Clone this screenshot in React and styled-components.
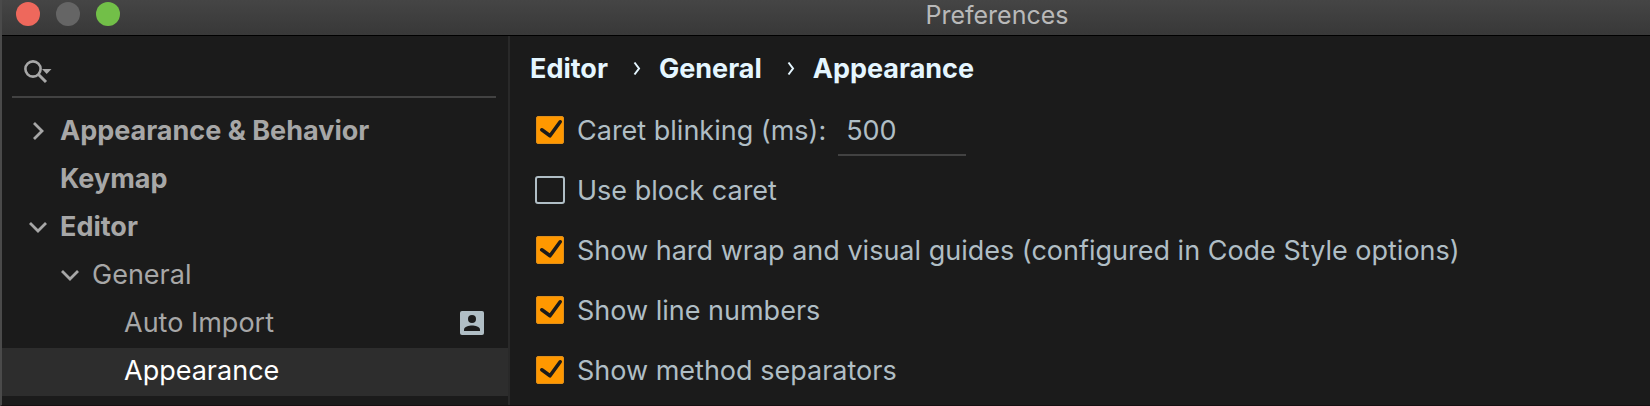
import { useState } from 'react';
import styled, { createGlobalStyle, css } from 'styled-components';

const GlobalStyle = createGlobalStyle`
  * {
    box-sizing: border-box;
  }

  body {
    margin: 0;
    background: #1b1b1b;
    font-family: Inter, "Liberation Sans", sans-serif;
    font-size: 27px;
    line-height: 32px;
  }

  button, input {
    font: inherit;
  }
`;

const tree = [
    {id: 'behavior', text: 'Appearance & Behavior', level: 0, bold: true, arrow: 'right'},
    {id: 'keymap', text: 'Keymap', level: 0, bold: true},
    {id: 'editor', text: 'Editor', level: 0, bold: true, arrow: 'down'},
    {id: 'general', text: 'General', level: 1, arrow: 'down'},
    {id: 'import', text: 'Auto Import', level: 2, project: true},
    {id: 'appearance', text: 'Appearance', level: 2},
];

const options = [
    {id: 'blinking', text: 'Caret blinking (ms):', checked: true, value: '500'},
    {id: 'block', text: 'Use block caret', checked: false},
    {id: 'guides', text: 'Show hard wrap and visual guides (configured in Code Style options)', checked: true},
    {id: 'numbers', text: 'Show line numbers', checked: true},
    {id: 'separators', text: 'Show method separators', checked: true},
];

const Window = styled.div`
  min-height: 100vh;
  display: flex;
  flex-direction: column;
  border-left: 2px solid #4a4a4a;
  border-bottom: 1px solid #161012;
  overflow: hidden;
`;

const TitleBar = styled.header`
  display: flex;
  align-items: flex-start;
  height: 36px;
  padding-left: 14px;
  background: linear-gradient(#454545, #383838);
  border-bottom: 1px solid #000;
`;

const Lights = styled.div`
  display: flex;
  gap: 16px;
  padding-top: 2px;
`;

const Light = styled.button`
  width: 24px;
  height: 24px;
  padding: 0;
  border: none;
  border-radius: 50%;
  background: ${(props) => props.$color};
`;

const Title = styled.h1`
  flex: 1;
  margin: 0;
  padding-left: 224px;
  font-size: 25px;
  font-weight: 400;
  line-height: 30px;
  text-align: center;
  color: #b9b9b9;
`;

const Body = styled.div`
  flex: 1;
  display: flex;
`;

const Sidebar = styled.nav`
  flex: none;
  width: 508px;
  border-right: 2px solid #292929;
`;

const Search = styled.label`
  display: flex;
  align-items: center;
  gap: 8px;
  height: 62px;
  margin: 0 12px 10px 10px;
  padding: 12px 0 0 12px;
  border-bottom: 2px solid #424242;
`;

const SearchInput = styled.input`
  flex: 1;
  min-width: 0;
  padding: 0;
  border: none;
  outline: none;
  background: transparent;
  color: #a7a7a7;
`;

const Tree = styled.ul`
  margin: 0;
  padding: 0;
  list-style: none;
`;

const TreeItem = styled.button`
  display: flex;
  align-items: center;
  width: 100%;
  height: 48px;
  padding: 0 24px 2px ${(props) => 24 + props.$level * 32}px;
  border: none;
  background: transparent;
  color: #a7a7a7;
  font-weight: ${(props) => (props.$bold ? 700 : 400)};
  text-align: left;

  ${(props) => props.$selected && css`
    background: #2d2d2d;
    color: #fff;
  `}
`;

const Arrow = styled.span`
  display: flex;
  flex: none;
  width: 34px;
`;

const TreeText = styled.span`
  flex: 1;
`;

const Content = styled.main`
  flex: 1;
  min-width: 0;
  padding: 16px 20px 0;
`;

const Breadcrumbs = styled.nav`
  display: flex;
  align-items: center;
  height: 34px;
  margin-bottom: 14px;
`;

const Crumb = styled.a`
  color: #e5f6ff;
  font-weight: 700;
  text-decoration: none;
`;

const CrumbArrow = styled.svg`
  margin: 0 18px 0 25px;
`;

const Row = styled.div`
  display: flex;
  align-items: center;
  gap: 12px;
  height: 60px;
`;

const Option = styled.label`
  display: flex;
  align-items: center;
  gap: 12px;
  color: #b0bec5;
  white-space: nowrap;
`;

const OptionText = styled.span`
  padding-top: 2px;
`;

const Box = styled.span`
  display: grid;
  flex: none;
  justify-items: center;
  width: 30px;
  margin-left: 5px;

  > * {
    grid-area: 1 / 1;
  }
`;

const Check = styled.input`
  appearance: none;
  width: 30px;
  height: 28px;
  margin: 0;
  border: 2px solid #b0bec5;
  border-radius: 3px;

  &:checked {
    width: 28px;
    border: 1px solid #e08e17;
    border-radius: 2px;
    background: #ff9800;
  }
`;

const Tick = styled.svg`
  pointer-events: none;
`;

const Field = styled.input`
  width: 128px;
  height: 46px;
  align-self: flex-end;
  margin-bottom: 4px;
  padding: 0 8px 4px;
  border: none;
  border-bottom: 2px solid #424242;
  border-radius: 0;
  outline: none;
  background: transparent;
  color: #b0bec5;
`;

const Separator = () => (
    <CrumbArrow width="8" height="16" viewBox="0 0 8 16" fill="none" aria-hidden="true">
        <path d="M1.5 1.5L6 7.5L1.5 13.5" stroke="#e5f6ff" strokeWidth="2"/>
    </CrumbArrow>
);

const SearchIcon = () => (
    <svg width="28" height="24" viewBox="0 0 28 24" fill="none" aria-hidden="true">
        <circle cx="9" cy="9" r="7.6" stroke="#a7a7a7" strokeWidth="2.6"/>
        <path d="M14.5 14.5L22 22" stroke="#a7a7a7" strokeWidth="3"/>
        <path d="M18 9H27.5L22.7 14Z" fill="#a7a7a7"/>
    </svg>
);

const Chevron = ({down}) => (
    <svg width="24" height="24" viewBox="0 0 24 24" fill="none" stroke="#a7a7a7" strokeWidth="2.8" aria-hidden="true">
        {down ? <path d="M4 8L12 16L20 8"/> : <path d="M8 4L16 12L8 20"/>}
    </svg>
);

const ProjectIcon = () => (
    <svg width="24" height="24" viewBox="0 0 24 24" aria-hidden="true">
        <rect width="24" height="24" rx="2" fill="#b0bec5"/>
        <circle cx="12" cy="8" r="4" fill="#1b1b1b"/>
        <path d="M4 20V18.6C4 16 9 14.6 12 14.6S20 16 20 18.6V20Z" fill="#1b1b1b"/>
    </svg>
);

const App = () => {
    const [selected, setSelected] = useState('appearance');
    const [checked, setChecked] = useState(() => options.filter((item) => item.checked).map((item) => item.id));
    const toggle = (id) => {
        setChecked(checked.includes(id) ? checked.filter((item) => item !== id) : [...checked, id]);
    }
    return (
        <Window>
            <GlobalStyle/>
            <TitleBar>
                <Lights>
                    <Light $color="#ee685c" aria-label="Close"/>
                    <Light $color="#656565" aria-label="Minimize"/>
                    <Light $color="#72bf48" aria-label="Zoom"/>
                </Lights>
                <Title>Preferences</Title>
            </TitleBar>
            <Body>
                <Sidebar>
                    <Search>
                        <SearchIcon/>
                        <SearchInput type="text" aria-label="Search settings"/>
                    </Search>
                    <Tree>
                        {tree.map((item) => (
                            <li key={item.id}>
                                <TreeItem $level={item.level} $bold={item.bold} $selected={item.id === selected} onClick={() => setSelected(item.id)}>
                                    <Arrow>{item.arrow && <Chevron down={item.arrow === 'down'}/>}</Arrow>
                                    <TreeText>{item.text}</TreeText>
                                    {item.project && <ProjectIcon/>}
                                </TreeItem>
                            </li>))}
                    </Tree>
                </Sidebar>
                <Content>
                    <Breadcrumbs>
                        <Crumb href="#editor">Editor</Crumb>
                        <Separator/>
                        <Crumb href="#general">General</Crumb>
                        <Separator/>
                        <Crumb href="#appearance">Appearance</Crumb>
                    </Breadcrumbs>
                    {options.map((item) => (
                        <Row key={item.id}>
                            <Option>
                                <Box>
                                    <Check type="checkbox" checked={checked.includes(item.id)} onChange={() => toggle(item.id)}/>
                                    {checked.includes(item.id) && (
                                        <Tick width="30" height="28" viewBox="0 0 30 28" fill="none">
                                            <path d="M6.8 13.8L15 19.8L25.2 5.8" stroke="#1b1b1b" strokeWidth="3.6" strokeLinecap="round" strokeLinejoin="round"/>
                                        </Tick>)}
                                </Box>
                                <OptionText>{item.text}</OptionText>
                            </Option>
                            {item.value && <Field type="text" defaultValue={item.value} aria-label="Caret blinking period"/>}
                        </Row>))}
                </Content>
            </Body>
        </Window>
    );
};

export default App;
